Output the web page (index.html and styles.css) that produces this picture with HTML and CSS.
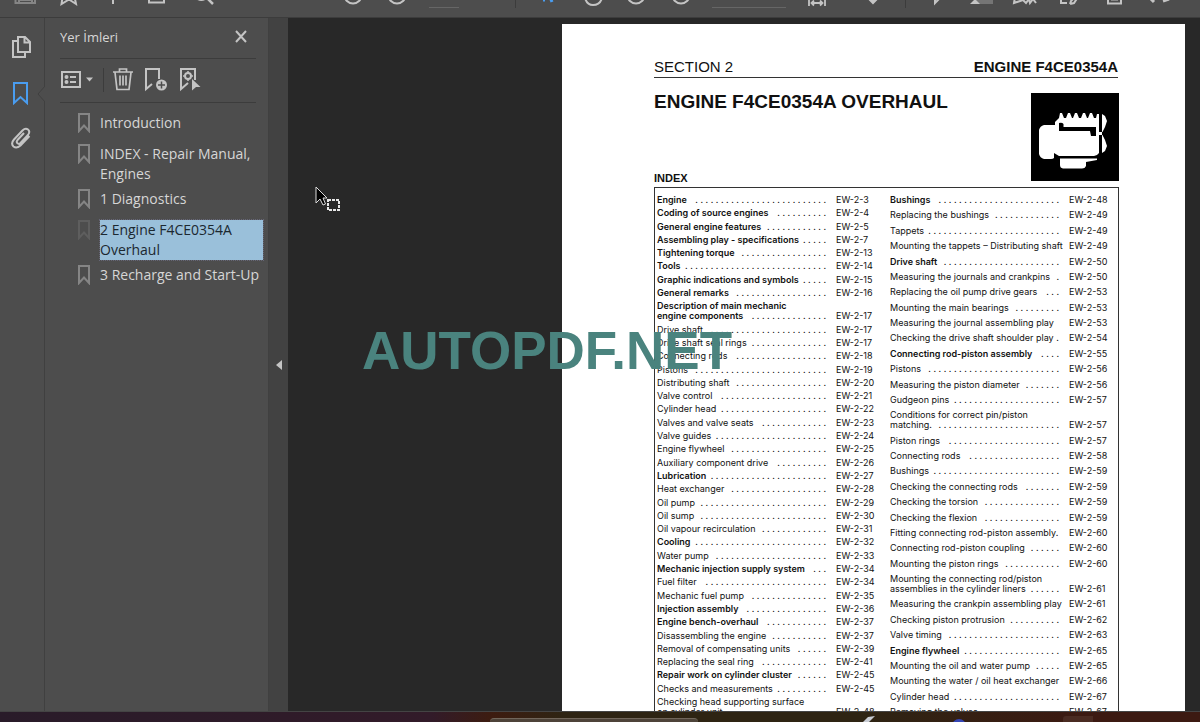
FILE: index.html
```html
<!DOCTYPE html>
<html lang="tr">
<head>
<meta charset="utf-8">
<title>Engine F4CE0354A Overhaul</title>
<link rel="stylesheet" href="styles.css">
</head>
<body>
<header class="toolbar">
  <button class="tool" aria-label="Save"><svg viewBox="0 0 44 17"><path class="dim" d="M13.500-3V3H33V-3M17 3V0H30V3"/></svg></button>
  <button class="tool" aria-label="Star"><svg viewBox="0 0 44 17"><path d="M17-6L15.500 4L23-0.500L30 4L28-6"/></svg></button>
  <button class="tool" aria-label="Upload"><svg viewBox="0 0 44 17"><path d="M23-8V4"/></svg></button>
  <button class="tool" aria-label="Print"><svg viewBox="0 0 44 17"><path d="M15-4V2.500H30V-4"/></svg></button>
  <button class="tool" aria-label="Find"><svg viewBox="0 0 44 17"><path d="M20-1Q24 1 28-2M28-3L35 4" stroke-width="2.500"/></svg></button>
  <button class="tool nav-start" aria-label="Previous page"><svg viewBox="0 0 44 17"><circle cx="22" cy="-5" r="8.500"/></svg></button>
  <button class="tool" aria-label="Next page"><svg viewBox="0 0 44 17"><circle cx="22" cy="-5" r="8.500"/></svg></button>
  <input class="field page-field" aria-label="Page">
  <span class="sep"></span>
  <button class="tool" aria-label="Select"><svg viewBox="0 0 44 17"><path class="blue" d="M15 0h2M22-3L24 2" stroke-width="3"/></svg></button>
  <button class="tool" aria-label="Hand"><svg viewBox="0 0 44 17"><path d="M13-2Q15 5 21 5Q28 5 30-2"/></svg></button>
  <button class="tool" aria-label="Zoom out"><svg viewBox="0 0 44 17"><circle cx="20" cy="-5" r="8.500"/></svg></button>
  <button class="tool" aria-label="Zoom in"><svg viewBox="0 0 44 17"><circle cx="21" cy="-5" r="8.500"/></svg></button>
  <input class="field zoom-field" aria-label="Zoom">
  <button class="tool" aria-label="Fit width"><svg viewBox="0 0 44 17"><path d="M15-2V6M31-2V6M18 3H28M20 0.500L17.500 3L20 5.500M26 0.500L28.500 3L26 5.500" stroke-width="1.800"/></svg></button>
  <button class="tool scroll-tool" aria-label="Scroll"><svg viewBox="0 0 44 17"><path class="fill" d="M18-1L22 3L26-1Z"/></svg></button>
  <span class="sep short"></span>
  <button class="tool" aria-label="Comment"><svg viewBox="0 0 44 17"><path d="M20-3V3L25-2"/></svg></button>
  <button class="tool" aria-label="Highlight"><svg viewBox="0 0 44 17"><path fill="#757575" d="M15 0H34V4H15Z" stroke="none"/><path class="fill" stroke="none" d="M11 4L16-1L21 4Z"/></svg></button>
  <button class="tool" aria-label="Sign"><svg viewBox="0 0 44 17"><path d="M12-3L11 3L20 0L23 3L26-1L27 3L30-1L33 3"/></svg></button>
  <button class="tool" aria-label="Edit"><svg viewBox="0 0 44 17"><path d="M14-3V3H20M23 4L24 1L29-4M23 4L27 3L31-3"/></svg></button>
  <button class="tool" aria-label="Scan"><svg viewBox="0 0 44 17"><path d="M17-3V3.500H30V-3"/><path stroke-width="1" d="M20 0H27"/></svg></button>
  <button class="tool" aria-label="Share"><svg viewBox="0 0 44 17"><path d="M15-2L19 2M28 1L34-1" stroke-width="3"/></svg></button>
</header>
<div class="workspace">
  <nav class="rail">
    <button class="rail-btn" aria-label="Page thumbnails"><svg width="22" height="24" viewBox="0 0 22 24"><path d="M8 2H15L20 7V17H8ZM14.500 2V7.500H20M8 6H3V22H15V17"/></svg></button>
    <button class="rail-btn" aria-label="Bookmarks"><svg width="22" height="24" viewBox="0 0 22 24"><path class="blue" d="M4 2H17V22L10.500 16L4 22Z"/></svg></button>
    <button class="rail-btn" aria-label="Attachments"><svg width="22" height="24" viewBox="0 0 22 24"><path d="M14 6L7.500 13Q6 15 7.500 16.300Q9 17.500 10.500 16L18 8Q20.500 4.500 18 2.500Q15.500 0.500 12.500 3.500L4 12.500Q0.500 16.500 3.500 19.500Q6.500 22 10.500 18.500L19.500 9"/></svg></button>
  </nav>
  <svg class="notch" width="8" height="16" viewBox="0 0 8 16"><path d="M8 0L1 8L8 16" fill="#4d4d4d" stroke="#404040"/></svg>
  <aside class="panel">
    <div class="panel-head">
      <h2>Yer İmleri</h2>
      <button aria-label="Kapat"><svg width="14" height="14" viewBox="0 0 14 14"><path d="M2 1L12 12M12 1L2 12"/></svg></button>
    </div>
    <div class="panel-tools">
      <button class="options" aria-label="Seçenekler"><svg width="34" height="24" viewBox="0 0 34 24"><path d="M2 4H20V19H2ZM10 9H16M10 14H16"/><circle class="fill" cx="6.500" cy="9" r="1"/><circle class="fill" cx="6.500" cy="14" r="1"/><path class="fill" stroke="none" d="M26 9.500H33L29.500 13.500Z"/></svg></button>
      <button aria-label="Sil"><svg width="22" height="24" viewBox="0 0 22 24"><path d="M1 4H21M7.500 3.500V1H14.500V3.500M3 4.500L5 21.500H17L19 4.500M8 7.500V17.500M11 7.500V17.500M14 7.500V17.500" stroke-width="1.700"/></svg></button>
      <button aria-label="Yeni yer imi"><svg width="24" height="24" viewBox="0 0 24 24"><path d="M8 16L2 21V1H15V11"/><circle class="fill" cx="17.500" cy="17" r="5.500" stroke="none"/><path d="M14 17H21M17.500 13.500V20.500" stroke="#4d4d4d" stroke-width="1.500"/></svg></button>
      <button aria-label="Yer imini bul"><svg width="24" height="24" viewBox="0 0 24 24"><path d="M10 15L3 21V1H17V12"/><circle cx="10" cy="8" r="3"/><path d="M10 3V4.500M10 11.500V13M5 8H6.500M13.500 8H15" stroke-width="1.500"/><path class="fill" stroke="none" d="M14 11L22.500 19L18 19L14 22.500Z"/></svg></button>
    </div>
    <ul class="marks">
      <li><svg class="mark" viewBox="0 0 12 20"><path d="M1 1H11V18L6 12.500L1 18Z"/></svg><a href="#">Introduction</a></li>
      <li><svg class="mark" viewBox="0 0 12 20"><path d="M1 1H11V18L6 12.500L1 18Z"/></svg><a href="#">INDEX - Repair Manual, Engines</a></li>
      <li><svg class="mark" viewBox="0 0 12 20"><path d="M1 1H11V18L6 12.500L1 18Z"/></svg><a href="#">1 Diagnostics</a></li>
      <li class="current"><svg class="mark" viewBox="0 0 12 20"><path d="M1 1H11V18L6 12.500L1 18Z"/></svg><a href="#">2 Engine F4CE0354A Overhaul</a></li>
      <li><svg class="mark" viewBox="0 0 12 20"><path d="M1 1H11V18L6 12.500L1 18Z"/></svg><a href="#">3 Recharge and Start-Up</a></li>
    </ul>
  </aside>
  <button class="collapse" aria-label="Paneli daralt"><svg width="6" height="10" viewBox="0 0 6 10"><path class="fill" stroke="none" d="M6 0V10L0 5Z"/></svg></button>
  <main class="canvas">
    <article class="sheet">
      <div class="running"><span>SECTION 2</span><b>ENGINE F4CE0354A</b></div>
      <div class="title-row">
        <div class="titles"><h1>ENGINE F4CE0354A OVERHAUL</h1><h2>INDEX</h2></div>
        <svg class="engine" viewBox="0 0 88 88"><path fill="#000" d="M0 0H88V88H0Z"/><path fill="#fff" d="M24 29L28 25L29 20H31L33 25H35L37 20H39L41 25H42L44 20H46L48 25H50L52 20H54L56 25H57L59 20H61L63 25H65L66 21H68V39H71V42H68V60Q66 63 63 63H28L23 60V65Q22 66 20 66H13Q9 65 8 61V37Q9 33 13 32H24Z"/><path fill="#000" d="M28 30Q31 29 32.500 31V34H65V43H60L59 38H28Z"/><path fill="#fff" d="M71 21L74 23L76 28L74 34L71.500 39H70V42H71.500L74 47L76 53L74 58L71 60ZM29 65.500H66V67L55 69V73Q54 75.500 51 75.500H32Q29 75 29 72Z"/></svg>
      </div>
      <div class="index">
        <ol>
          <li><a href="#"><b>Engine</b><i></i><span>EW-2-3</span></a></li>
          <li><a href="#"><b>Coding of source engines</b><i></i><span>EW-2-4</span></a></li>
          <li><a href="#"><b>General engine features</b><i></i><span>EW-2-5</span></a></li>
          <li><a href="#"><b>Assembling play - specifications</b><i></i><span>EW-2-7</span></a></li>
          <li><a href="#"><b>Tightening torque</b><i></i><span>EW-2-13</span></a></li>
          <li><a href="#"><b>Tools</b><i></i><span>EW-2-14</span></a></li>
          <li><a href="#"><b>Graphic indications and symbols</b><i></i><span>EW-2-15</span></a></li>
          <li><a href="#"><b>General remarks</b><i></i><span>EW-2-16</span></a></li>
          <li><a href="#"><b class="over">Description of main mechanic</b><b>engine components</b><i></i><span>EW-2-17</span></a></li>
          <li><a href="#">Drive shaft<i></i><span>EW-2-17</span></a></li>
          <li><a href="#">Drive shaft seal rings<i></i><span>EW-2-17</span></a></li>
          <li><a href="#">Connecting rods<i></i><span>EW-2-18</span></a></li>
          <li><a href="#">Pistons<i></i><span>EW-2-19</span></a></li>
          <li><a href="#">Distributing shaft<i></i><span>EW-2-20</span></a></li>
          <li><a href="#">Valve control<i></i><span>EW-2-21</span></a></li>
          <li><a href="#">Cylinder head<i></i><span>EW-2-22</span></a></li>
          <li><a href="#">Valves and valve seats<i></i><span>EW-2-23</span></a></li>
          <li><a href="#">Valve guides<i></i><span>EW-2-24</span></a></li>
          <li><a href="#">Engine flywheel<i></i><span>EW-2-25</span></a></li>
          <li><a href="#">Auxiliary component drive<i></i><span>EW-2-26</span></a></li>
          <li><a href="#"><b>Lubrication</b><i></i><span>EW-2-27</span></a></li>
          <li><a href="#">Heat exchanger<i></i><span>EW-2-28</span></a></li>
          <li><a href="#">Oil pump<i></i><span>EW-2-29</span></a></li>
          <li><a href="#">Oil sump<i></i><span>EW-2-30</span></a></li>
          <li><a href="#">Oil vapour recirculation<i></i><span>EW-2-31</span></a></li>
          <li><a href="#"><b>Cooling</b><i></i><span>EW-2-32</span></a></li>
          <li><a href="#">Water pump<i></i><span>EW-2-33</span></a></li>
          <li><a href="#"><b>Mechanic injection supply system</b><i></i><span>EW-2-34</span></a></li>
          <li><a href="#">Fuel filter<i></i><span>EW-2-34</span></a></li>
          <li><a href="#">Mechanic fuel pump<i></i><span>EW-2-35</span></a></li>
          <li><a href="#"><b>Injection assembly</b><i></i><span>EW-2-36</span></a></li>
          <li><a href="#"><b>Engine bench-overhaul</b><i></i><span>EW-2-37</span></a></li>
          <li><a href="#">Disassembling the engine<i></i><span>EW-2-37</span></a></li>
          <li><a href="#">Removal of compensating units<i></i><span>EW-2-39</span></a></li>
          <li><a href="#">Replacing the seal ring<i></i><span>EW-2-41</span></a></li>
          <li><a href="#"><b>Repair work on cylinder cluster</b><i></i><span>EW-2-45</span></a></li>
          <li><a href="#">Checks and measurements<i></i><span>EW-2-45</span></a></li>
          <li><a href="#"><span class="over">Checking head supporting surface</span>on cylinder unit<i></i><span>EW-2-48</span></a></li>
        </ol>
        <ol>
          <li><a href="#"><b>Bushings</b><i></i><span>EW-2-48</span></a></li>
          <li><a href="#">Replacing the bushings<i></i><span>EW-2-49</span></a></li>
          <li><a href="#">Tappets<i></i><span>EW-2-49</span></a></li>
          <li><a href="#">Mounting the tappets – Distributing shaft<span>EW-2-49</span></a></li>
          <li><a href="#"><b>Drive shaft</b><i></i><span>EW-2-50</span></a></li>
          <li><a href="#">Measuring the journals and crankpins<i></i><span>EW-2-50</span></a></li>
          <li><a href="#">Replacing the oil pump drive gears<i></i><span>EW-2-53</span></a></li>
          <li><a href="#">Mounting the main bearings<i></i><span>EW-2-53</span></a></li>
          <li><a href="#">Measuring the journal assembling play<span>EW-2-53</span></a></li>
          <li><a href="#">Checking the drive shaft shoulder play .<span>EW-2-54</span></a></li>
          <li><a href="#"><b>Connecting rod-piston assembly</b><i></i><span>EW-2-55</span></a></li>
          <li><a href="#">Pistons<i></i><span>EW-2-56</span></a></li>
          <li><a href="#">Measuring the piston diameter<i></i><span>EW-2-56</span></a></li>
          <li><a href="#">Gudgeon pins<i></i><span>EW-2-57</span></a></li>
          <li><a href="#"><span class="over">Conditions for correct pin/piston</span>matching.<i></i><span>EW-2-57</span></a></li>
          <li><a href="#">Piston rings<i></i><span>EW-2-57</span></a></li>
          <li><a href="#">Connecting rods<i></i><span>EW-2-58</span></a></li>
          <li><a href="#">Bushings<i></i><span>EW-2-59</span></a></li>
          <li><a href="#">Checking the connecting rods<i></i><span>EW-2-59</span></a></li>
          <li><a href="#">Checking the torsion<i></i><span>EW-2-59</span></a></li>
          <li><a href="#">Checking the flexion<i></i><span>EW-2-59</span></a></li>
          <li><a href="#">Fitting connecting rod-piston assembly.<span>EW-2-60</span></a></li>
          <li><a href="#">Connecting rod-piston coupling<i></i><span>EW-2-60</span></a></li>
          <li><a href="#">Mounting the piston rings<i></i><span>EW-2-60</span></a></li>
          <li><a href="#"><span class="over">Mounting the connecting rod/piston</span>assemblies in the cylinder liners<i></i><span>EW-2-61</span></a></li>
          <li><a href="#">Measuring the crankpin assembling play<span>EW-2-61</span></a></li>
          <li><a href="#">Checking piston protrusion<i></i><span>EW-2-62</span></a></li>
          <li><a href="#">Valve timing<i></i><span>EW-2-63</span></a></li>
          <li><a href="#"><b>Engine flywheel</b><i></i><span>EW-2-65</span></a></li>
          <li><a href="#">Mounting the oil and water pump<i></i><span>EW-2-65</span></a></li>
          <li><a href="#">Mounting the water / oil heat exchanger<span>EW-2-66</span></a></li>
          <li><a href="#">Cylinder head<i></i><span>EW-2-67</span></a></li>
          <li><a href="#">Removing the valves<i></i><span>EW-2-67</span></a></li>
        </ol>
      </div>
    </article>
    <svg class="cursor" width="28" height="28" viewBox="0 0 28 28"><path d="M2 1V17L6 13L9 19L11.500 18L9 12H13Z" fill="#000" stroke="#ddd"/><path d="M14 14H25V24H14Z" fill="none" stroke="#e8e8e8" stroke-width="2" stroke-dasharray="3 1"/></svg>
    <div class="watermark">AUTOPDF.NET</div>
  </main>
</div>
<footer class="taskbar">
  <div class="search"></div>
  <svg class="apps" width="230" height="10" viewBox="0 0 230 10"><path d="M0 10L5 5L12 4L6 10Z" fill="#c8ccd4"/><circle cx="96" cy="14" r="7" fill="#3546b5"/><path d="M200 10V7Q200 4 203 4H236Q239 4 239 7V10Z" fill="#4a2b22"/></svg>
</footer>
</body>
</html>
```
FILE: styles.css
```css
* { box-sizing: border-box; }

body {
  margin: 0;
  height: 100vh;
  display: flex;
  flex-direction: column;
  overflow: hidden;
  background: #282828;
  font-family: "Open Sans", "Noto Sans", sans-serif;
  font-size: 14px;
  color: #d6d6d6;
}

button { border: 0; padding: 0; background: none; display: flex; }
svg { fill: none; stroke: #c4c4c4; stroke-width: 2; flex: none; }
svg .fill { fill: #c4c4c4; }
svg .blue { stroke: #4a9df0; }
svg .dim { stroke: #858585; }
a { color: inherit; text-decoration: none; }
h1, h2, ul, ol { margin: 0; padding: 0; list-style: none; }

.toolbar {
  display: flex;
  flex: none;
  height: 18px;
  padding-left: 2px;
  background: #4d4d4d;
  border-bottom: 1px solid #3c3c3c;
}
.tool { width: 44px; flex: none; }
.tool svg { width: 44px; height: 17px; }
.nav-start { margin-left: 109px; }
.field {
  height: 8px;
  padding: 0;
  border: 0;
  border-bottom: 1px solid #666;
  background: none;
}
.page-field { width: 30px; margin: 0 56px 0 10px; }
.zoom-field { width: 74px; margin: 0 8px; }
.scroll-tool { margin-left: 13px; }
.sep { width: 1px; height: 8px; margin-right: 12px; background: #3c3c3c; }
.sep.short { margin: 0 9px 0 10px; }

.workspace { flex: 1; min-height: 0; display: flex; position: relative; }

.rail {
  flex: none;
  width: 45px;
  padding: 17px 0 0 10px;
  display: flex;
  flex-direction: column;
  gap: 22px;
  background: #4d4d4d;
  border-right: 1px solid #404040;
}
.notch { position: absolute; left: 37px; top: 68px; stroke-width: 1; }

.panel {
  flex: none;
  width: 224px;
  padding: 0 5px 0 15px;
  background: #4d4d4d;
  border-right: 1px solid #404040;
}
.panel-head, .panel-tools {
  display: flex;
  align-items: center;
  margin-right: 7px;
  border-bottom: 1px solid #3c3c3c;
}
.panel-head { height: 41px; justify-content: space-between; padding: 0 8px 3px 0; }
.panel-head h2 { font-size: 13px; font-weight: 400; }
.panel-tools { height: 44px; gap: 10px; padding-bottom: 2px; }
.options { margin-right: -2px; padding-right: 9px; border-right: 1px solid #3c3c3c; }

.marks { padding: 10px 0 0 18px; line-height: 20px; }
.marks li { display: flex; gap: 10px; min-height: 31px; padding-bottom: 5px; }
.marks a { flex: 1; }
.mark { width: 12px; height: 20px; stroke: #858585; }
.current a {
  background: #9ac0da;
  color: #1c2830;
  outline: 1px dotted #667;
}
.current .mark { stroke: #5e5e5e; }

.collapse {
  flex: none;
  width: 19px;
  align-items: center;
  justify-content: center;
  background: #424242;
}

.canvas {
  flex: 1;
  min-width: 0;
  display: flex;
  position: relative;
  overflow: hidden;
  padding: 6px 15px 0 274px;
}
.sheet {
  flex: 1;
  display: flex;
  flex-direction: column;
  margin-bottom: -7px;
  padding: 33px 66px 0 92px;
  background: #fff;
  color: #111;
  font-family: "Liberation Sans", Arial, sans-serif;
}
.running {
  display: flex;
  justify-content: space-between;
  margin-right: 1px;
  font-size: 15px;
  line-height: 20px;
  border-bottom: 1px solid #333;
}
.title-row { display: flex; justify-content: space-between; padding: 15px 0 6px; }
.titles { display: flex; flex-direction: column; justify-content: space-between; }
.titles h1 { font-size: 19px; line-height: 18px; }
.titles h2 { font-size: 11px; line-height: 6px; }
.engine { width: 88px; height: 88px; stroke: none; }

.index {
  flex: 1;
  display: grid;
  grid-template-columns: 1fr 1fr;
  column-gap: 12px;
  padding: 7px 7px 0 2px;
  border: 1px solid #333;
  font-family: Inter, "Liberation Sans", sans-serif;
  font-size: 9px;
  line-height: 10px;
}
.index ol { display: flex; flex-direction: column; justify-content: space-between; }
.index a { display: flex; flex-wrap: wrap; white-space: nowrap; }
.index b { font-weight: 600; }
.index .over { flex: 0 0 100%; }
.index i {
  flex: 1;
  min-width: 0;
  height: 10px;
  margin: 0 2px 0 4px;
  overflow: hidden;
  white-space: normal;
  text-align: right;
  font-style: normal;
}
.index i::before { content: ". . . . . . . . . . . . . . . . . . . . . . . . . . . . . . . . . . ."; }
.index a > span:last-child { width: 42px; margin-left: auto; }
.index i + span:last-child { flex: none; }
.index i { padding-right: 8px; }

.cursor { position: absolute; left: 26px; top: 168px; stroke-width: 1; }
.watermark {
  position: absolute;
  left: 74px;
  top: 305px;
  color: #4a837e;
  font: bold 53px/56px "Liberation Sans", Arial, sans-serif;
}

.taskbar {
  flex: none;
  height: 11px;
  display: flex;
  justify-content: space-between;
  align-items: flex-end;
  padding: 0 107px 0 490px;
  border-top: 1px solid #444;
  background: linear-gradient(90deg, #291b29 0%, #321b29 36%, #3d1c10 41%, #2e2413 47%, #2e2413 72%, #3c1a12 90%);
}
.search { width: 208px; height: 4px; border-radius: 8px 8px 0 0; background: #4d4339; border-top: 1px solid #71665b; }
.apps { stroke: none; }
```
